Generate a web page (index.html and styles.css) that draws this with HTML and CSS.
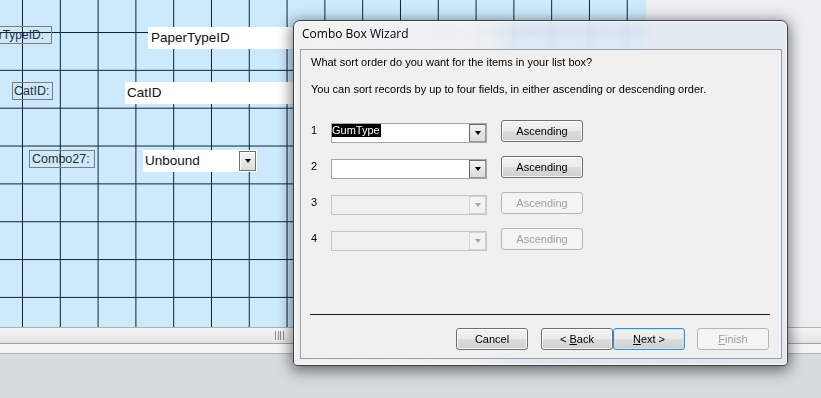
FILE: index.html
```html
<!DOCTYPE html>
<html lang="en">
<head>
    <meta charset="UTF-8">
    <title>Combo Box Wizard</title>
    <link rel="stylesheet" href="styles.css">
</head>
<body>

<div class="screen">
    <div class="workspace">
        <div class="form-canvas">
            <div class="lbl lbl-paper">PaperTypeID:</div>
            <div class="txt txt-paper">PaperTypeID</div>
            <div class="lbl lbl-cat">CatID:</div>
            <div class="txt txt-cat">CatID</div>
            <div class="lbl lbl-combo">Combo27:</div>
            <div class="txt txt-combo">Unbound<span class="drop"><i></i></span></div>
        </div>
        <div class="workspace-rest"></div>
    </div>
    <div class="hscroll"><span class="grip"></span></div>
    <div class="status-strip"></div>
    <div class="desktop"></div>

    <div class="wizard">
        <div class="wizard-title">Combo Box Wizard</div>
        <div class="wizard-body">
            <p class="prompt">What sort order do you want for the items in your list box?</p>
            <p class="hint">You can sort records by up to four fields, in either ascending or descending order.</p>

            <div class="sort-rows">
                <div class="sort-row">
                    <span class="num">1</span>
                    <div class="combo"><span class="combo-val"><span class="sel">GumType</span></span><span class="combo-btn"><i></i></span></div>
                    <button class="btn">Ascending</button>
                </div>
                <div class="sort-row">
                    <span class="num">2</span>
                    <div class="combo"><span class="combo-val"></span><span class="combo-btn"><i></i></span></div>
                    <button class="btn">Ascending</button>
                </div>
                <div class="sort-row disabled">
                    <span class="num">3</span>
                    <div class="combo"><span class="combo-val"></span><span class="combo-btn"><i></i></span></div>
                    <button class="btn" disabled>Ascending</button>
                </div>
                <div class="sort-row disabled">
                    <span class="num">4</span>
                    <div class="combo"><span class="combo-val"></span><span class="combo-btn"><i></i></span></div>
                    <button class="btn" disabled>Ascending</button>
                </div>
            </div>

            <div class="wizard-foot">
                <div class="separator"></div>
                <div class="foot-buttons">
                    <button class="btn btn-cancel">Cancel</button>
                    <button class="btn btn-back">&lt; <u>B</u>ack</button>
                    <button class="btn btn-next"><u>N</u>ext &gt;</button>
                    <button class="btn btn-finish" disabled><u>F</u>inish</button>
                </div>
            </div>
        </div>
    </div>
</div>

</body>
</html>
```

FILE: styles.css
```css
body {
    margin: 0;
    background-color: #d6dbe0;
    font-family: 'Liberation Sans', Arial, sans-serif;
    overflow: hidden;
}
.screen {
    position: relative;
    width: 821px;
    height: 398px;
    display: flex;
    flex-direction: column;
}

/* form design area */
.workspace {
    display: flex;
    height: 327px;
}
.form-canvas {
    position: relative;
    width: 646px;
    overflow: hidden;
    background-color: #cceafc;
    background-image:
        linear-gradient(90deg, #0c2236 1px, transparent 1px),
        linear-gradient(#0c2236 1px, transparent 1px);
    background-size: 37.8px 37.85px;
    background-position: 22px 32px;
}
.workspace-rest {
    flex: 1;
    background-color: #eceff2;
}
.lbl {
    position: absolute;
    height: 18px;
    box-sizing: border-box;
    border: 1px solid #7d7d7d;
    font-size: 12.5px;
    line-height: 16px;
    color: #27303f;
    white-space: nowrap;
}
.lbl-paper {
    left: -40px;
    top: 26px;
    width: 92px;
    text-align: right;
    padding-right: 7px;
    font-size: 12px;
}
.lbl-cat {
    left: 12px;
    top: 82px;
    width: 41px;
    padding-left: 1px;
}
.lbl-combo {
    left: 29px;
    top: 150px;
    width: 66px;
    padding-left: 2px;
}
.txt {
    position: absolute;
    height: 22px;
    background-color: #fff;
    font-size: 13.5px;
    line-height: 22px;
    color: #111;
    padding-left: 3px;
    box-sizing: border-box;
    white-space: nowrap;
}
.txt-paper {
    left: 148px;
    top: 27px;
    width: 200px;
}
.txt-cat {
    left: 125px;
    top: 82px;
    width: 220px;
    padding-left: 2px;
}
.txt-combo {
    left: 143px;
    top: 150px;
    width: 114px;
    padding-left: 2px;
}
.txt-combo .drop {
    position: absolute;
    right: 1px;
    top: 1px;
    width: 17px;
    height: 20px;
    box-sizing: border-box;
    border: 1px solid #6f6f6f;
    box-shadow: inset 1px 1px 0 #fff;
    background: linear-gradient(#f4f4f4, #dcdcdc);
    display: flex;
    align-items: center;
    justify-content: center;
}
.drop i,
.combo-btn i {
    display: block;
    width: 0;
    height: 0;
    border-left: 3.5px solid transparent;
    border-right: 3.5px solid transparent;
    border-top: 4px solid #000;
}

.hscroll {
    height: 16px;
    box-sizing: border-box;
    border-top: 1px solid #aeb1b5;
    background: linear-gradient(#f6f6f6, #e4e4e4);
    position: relative;
}
.grip {
    position: absolute;
    left: 275px;
    top: 3px;
    width: 9px;
    height: 9px;
    background: repeating-linear-gradient(90deg, #8c8c8c 0 1px, transparent 1px 2.5px);
}
.status-strip {
    height: 11px;
    box-sizing: border-box;
    border-top: 1px solid #9da0a4;
    border-bottom: 1px solid #b3b6ba;
    background-color: #f2f3f4;
}
.desktop {
    flex: 1;
}

/* wizard dialog */
.wizard {
    position: absolute;
    left: 293px;
    top: 20px;
    width: 495px;
    height: 346px;
    box-sizing: border-box;
    padding: 0 5px 6px 6px;
    border: 1px solid #3d4045;
    border-radius: 7px 7px 4px 4px;
    background: linear-gradient(90deg, rgba(241,241,241,0.97) 0, rgba(240,241,242,0.95) 180px, rgba(224,234,242,0.8) 230px, rgba(226,233,240,0.85) 100%);
    backdrop-filter: blur(3px);
    box-shadow: inset 0 0 0 1px rgba(255,255,255,0.75), 0 3px 14px 2px rgba(0,0,0,0.5);
    display: flex;
    flex-direction: column;
}
.wizard-title {
    height: 28px;
    line-height: 26px;
    padding-left: 2px;
    font-family: 'Open Sans', 'Noto Sans', sans-serif;
    font-size: 12px;
    color: #000;
}
.wizard-body {
    flex: 1;
    border: 1px solid #9aa0a6;
    background-color: #f0f0f0;
    display: flex;
    flex-direction: column;
    font-size: 11px;
    color: #000;
}
.prompt,
.hint {
    margin: 0;
    line-height: 13px;
    padding-left: 10px;
}
.prompt {
    margin-top: 6px;
}
.hint {
    margin-top: 14px;
}
.sort-rows {
    margin-top: 24px;
    padding-left: 10px;
    display: flex;
    flex-direction: column;
    gap: 13px;
}
.sort-row {
    display: flex;
    align-items: flex-start;
    height: 23px;
}
.num {
    width: 20px;
    line-height: 13px;
    margin-top: 4px;
}
.combo {
    width: 156px;
    height: 20px;
    margin-top: 3px;
    box-sizing: border-box;
    border: 1px solid #a3a6ab;
    background-color: #fff;
    display: flex;
}
.combo-val {
    flex: 1;
    line-height: 13px;
}
.sel {
    display: inline-block;
    background-color: #000;
    color: #fff;
    padding-right: 1px;
}
.combo-btn {
    width: 17px;
    height: 18px;
    box-sizing: border-box;
    border: 1px solid #6c6c6c;
    border-right-color: #9a9a9a;
    border-bottom-color: #9a9a9a;
    background: linear-gradient(#f3f3f3, #dadada);
    display: flex;
    align-items: center;
    justify-content: center;
}
.sort-row.disabled .combo {
    background-color: #f0f0f0;
    border-color: #c3c5c8;
}
.sort-row.disabled .combo-btn {
    border-color: #d2d3d5;
    background: #f3f3f3;
}
.sort-row.disabled .combo-btn i {
    border-top-color: #a6a6a6;
}
.btn {
    height: 22px;
    box-sizing: border-box;
    border: 1px solid #707070;
    border-radius: 3px;
    background: linear-gradient(#f2f2f2 0%, #ebebeb 50%, #dddddd 51%, #cfcfcf 100%);
    box-shadow: inset 0 0 0 1px rgba(255,255,255,0.8);
    font-family: 'Liberation Sans', Arial, sans-serif;
    font-size: 11px;
    color: #000;
    padding: 0;
}
.btn:disabled {
    border-color: #b3b6b9;
    background: #f4f4f4;
    box-shadow: none;
    color: #a0a0a0;
}
.sort-row .btn {
    width: 82px;
    margin-left: 14px;
}
.wizard-foot {
    margin-top: auto;
}
.separator {
    margin: 0 11px 0 9px;
    border-top: 1px solid #1a1a1a;
}
.foot-buttons {
    display: flex;
    justify-content: flex-end;
    padding: 13px 12px 8px 0;
}
.foot-buttons .btn {
    width: 72px;
}
.btn-back {
    margin-left: 13px;
}
.btn-next {
    border-color: #3c8ed0;
    box-shadow: inset 0 0 0 1px #bfe6fa;
}
.btn-finish {
    margin-left: 12px;
}
```
